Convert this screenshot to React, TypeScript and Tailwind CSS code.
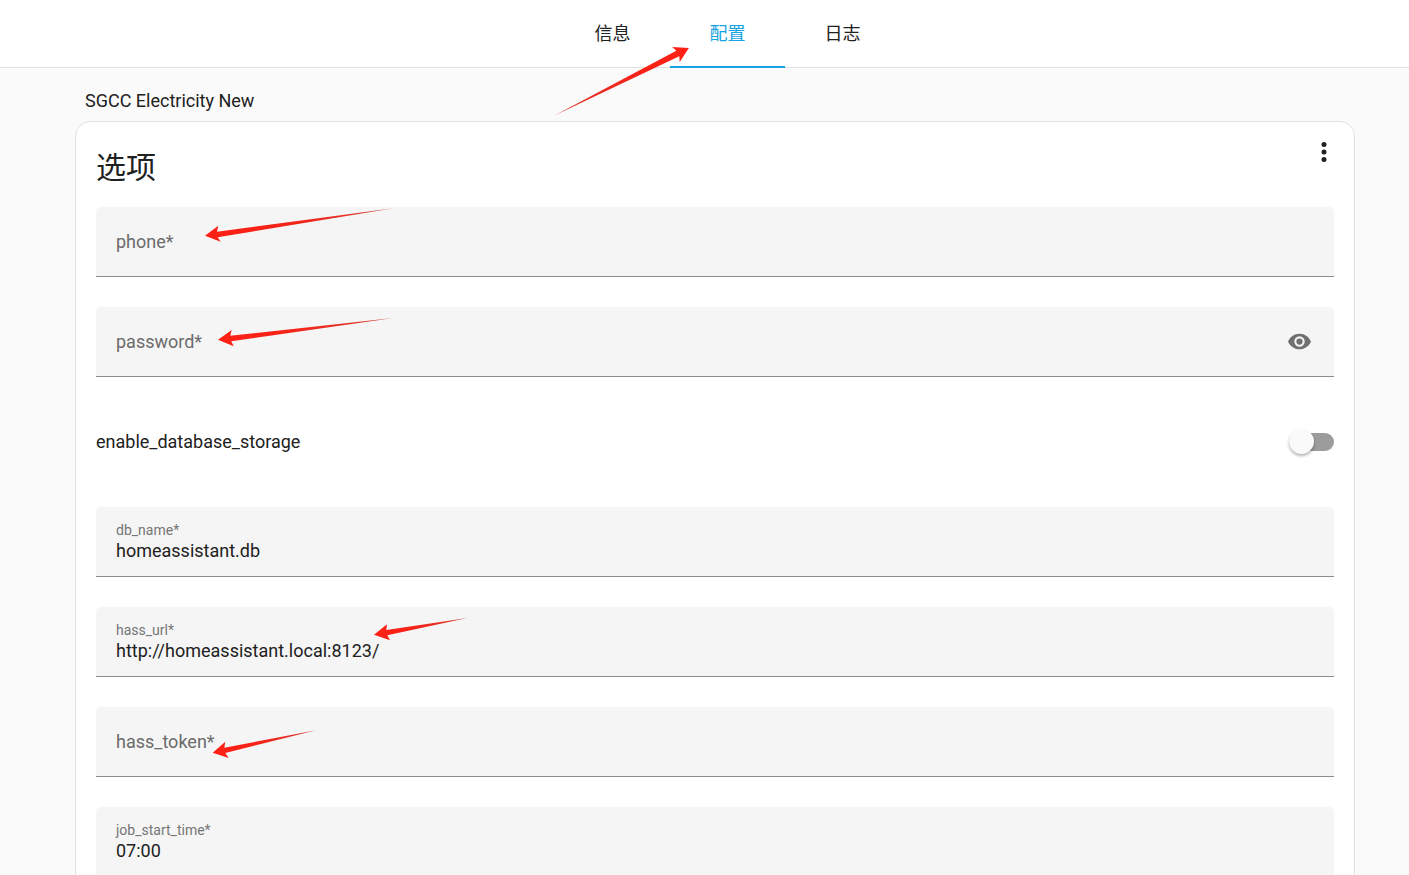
import { useState } from 'react';

type ArrowProps = { id: string; className: string; viewBox: string; points: string; tail: [number, number]; tip: [number, number] };

function Arrow({ id, className, viewBox, points, tail, tip }: ArrowProps) {
  return (
    <svg className={`pointer-events-none absolute overflow-visible ${className}`} viewBox={viewBox} aria-hidden="true">
      <defs>
        <linearGradient id={id} gradientUnits="userSpaceOnUse" x1={tail[0]} y1={tail[1]} x2={tip[0]} y2={tip[1]}>
          <stop offset="0" stopColor="#d83a32" />
          <stop offset="0.6" stopColor="#f52318" />
          <stop offset="1" stopColor="#ff2015" />
        </linearGradient>
      </defs>
      <polygon points={points} fill={`url(#${id})`} />
    </svg>
  );
}

type FieldProps = {
  name: string;
  initial?: string;
  type?: string;
  children?: React.ReactNode;
};

function Field({ name, initial = '', type = 'text', children }: FieldProps) {
  const [value, setValue] = useState(initial);
  const [shown, setShown] = useState(false);
  const filled = value !== '';
  return (
    <div className="relative flex h-[70px] shrink-0 items-center rounded-t-[5px] border-b border-[#8c8c8c] bg-[#f5f5f5] px-5">
      <div className="grid flex-1">
        <label
          htmlFor={name}
          className={
            filled
              ? 'pointer-events-none text-sm leading-[18px] text-[#757575]'
              : 'pointer-events-none col-start-1 row-start-1 text-lg leading-6 text-[#6b6b6b]'
          }
        >
          {name}*
        </label>
        <input
          id={name}
          type={type === 'password' && shown ? 'text' : type}
          value={value}
          onChange={(e) => setValue(e.target.value)}
          className={
            filled
              ? 'h-6 w-full bg-transparent text-lg leading-6 text-[#212121] outline-none'
              : 'col-start-1 row-start-1 h-6 w-full bg-transparent text-lg leading-6 text-[#212121] outline-none'
          }
        />
      </div>
      {type === 'password' && (
        <button type="button" aria-label="Show password" onClick={() => setShown(!shown)} className="mr-0.5 text-[#707070]">
          <svg className="size-[25px]" viewBox="0 0 24 24" fill="currentColor" aria-hidden="true">
            <path d="M12,9A3,3 0 0,0 9,12A3,3 0 0,0 12,15A3,3 0 0,0 15,12A3,3 0 0,0 12,9M12,17A5,5 0 0,1 7,12A5,5 0 0,1 12,7A5,5 0 0,1 17,12A5,5 0 0,1 12,17M12,4.5C7,4.5 2.73,7.61 1,12C2.73,16.39 7,19.5 12,19.5C17,19.5 21.27,16.39 23,12C21.27,7.61 17,4.5 12,4.5Z" />
          </svg>
        </button>
      )}
      {children}
    </div>
  );
}

const fieldArrow = 'left-0 top-0 h-[70px] w-[380px]';
const fieldBox = '0 0 380 70';
const tab = 'relative h-[68px] w-[115px] border-b-2 text-center text-lg leading-[68px]';

export default function App() {
  return (
    <div className="flex h-screen flex-col bg-[#fafafa] font-[Roboto,'Noto_Sans_CJK_SC',sans-serif] text-[#212121]">
      <header className="relative z-10 h-[68px] shrink-0 border-b border-[#e0e0e0] bg-white pl-[46px]">
        <nav className="flex justify-center">
          <a href="#info" className={`${tab} border-transparent`}>信息</a>
          <a href="#config" aria-current="page" className={`${tab} border-[#18a4e0] text-[#18a4e0]`}>
            配置
            <Arrow
              id="arrow-tab"
              className="-left-[116px] top-[46px] h-[70px] w-[136px]"
              viewBox="554 46 136 70"
              points="554,115.7 676.3,50.7 672.3,47 688.9,48 679.7,62 679.3,56.3"
              tail={[554, 115]}
              tip={[689, 48]}
            />
          </a>
          <a href="#log" className={`${tab} border-transparent`}>日志</a>
        </nav>
      </header>

      <main className="flex-1 overflow-y-auto pl-[21px] [scrollbar-width:none]">
        <div className="mx-auto max-w-[1280px] pt-[21px]">
          <p className="px-[10px] pb-2 text-lg leading-6">SGCC Electricity New</p>
          <section className="rounded-[15px] border border-[#e0e0e0] bg-white px-5 pb-5">
            <div className="flex h-[85px] items-start justify-between">
              <h1 className="pt-[22px] text-3xl leading-[48px]">选项</h1>
              <button type="button" aria-label="Menu" className="-mr-[10px] mt-[10px] flex size-10 items-center justify-center">
                <svg className="size-[30px]" viewBox="0 0 24 24" fill="currentColor" aria-hidden="true">
                  <circle cx="12" cy="6" r="2" />
                  <circle cx="12" cy="12" r="2" />
                  <circle cx="12" cy="18" r="2" />
                </svg>
              </button>
            </div>

            <form className="flex flex-col gap-[30px]">
              <Field name="phone">
                <Arrow
                  id="arrow-phone"
                  className={fieldArrow}
                  viewBox={fieldBox}
                  points="109,28.7 122.3,18.7 121,24.7 297.3,1.3 121.7,30.3 124.7,34.7"
                  tail={[297, 1]}
                  tip={[109, 29]}
                />
              </Field>
              <Field name="password" type="password">
                <Arrow
                  id="arrow-password"
                  className={fieldArrow}
                  viewBox={fieldBox}
                  points="122,32.7 135.7,23 134.3,28.7 297.3,11 135.3,34.3 137.7,39.3"
                  tail={[297, 11]}
                  tip={[122, 33]}
                />
              </Field>
              <div className="flex h-[70px] items-center justify-between">
                <label htmlFor="enable_database_storage" className="text-lg leading-6">enable_database_storage</label>
                <input
                  id="enable_database_storage"
                  type="checkbox"
                  role="switch"
                  className="relative h-[18px] w-[45px] appearance-none rounded-full bg-[#9c9c9c] before:absolute before:-top-1 before:left-0 before:size-[25px] before:rounded-full before:bg-[#fafafa] before:shadow-[0_2px_3px_rgba(0,0,0,0.3)] checked:bg-[#8fd0ef] checked:before:left-5 checked:before:bg-[#18a4e0]"
                />
              </div>
              <Field name="db_name" initial="homeassistant.db" />
              <Field name="hass_url" initial="http://homeassistant.local:8123/">
                <Arrow
                  id="arrow-url"
                  className={fieldArrow}
                  viewBox={fieldBox}
                  points="278,27.7 291,17.3 290.3,23 371.3,11 291.3,28.3 294,33.3"
                  tail={[371, 11]}
                  tip={[278, 28]}
                />
              </Field>
              <Field name="hass_token">
                <Arrow
                  id="arrow-token"
                  className={fieldArrow}
                  viewBox={fieldBox}
                  points="116.7,45.7 129.3,34.7 128.3,40.7 220,23.3 129.3,46 132.7,51"
                  tail={[220, 23]}
                  tip={[117, 46]}
                />
              </Field>
              <Field name="job_start_time" initial="07:00" />
            </form>
          </section>
        </div>
      </main>
    </div>
  );
}
